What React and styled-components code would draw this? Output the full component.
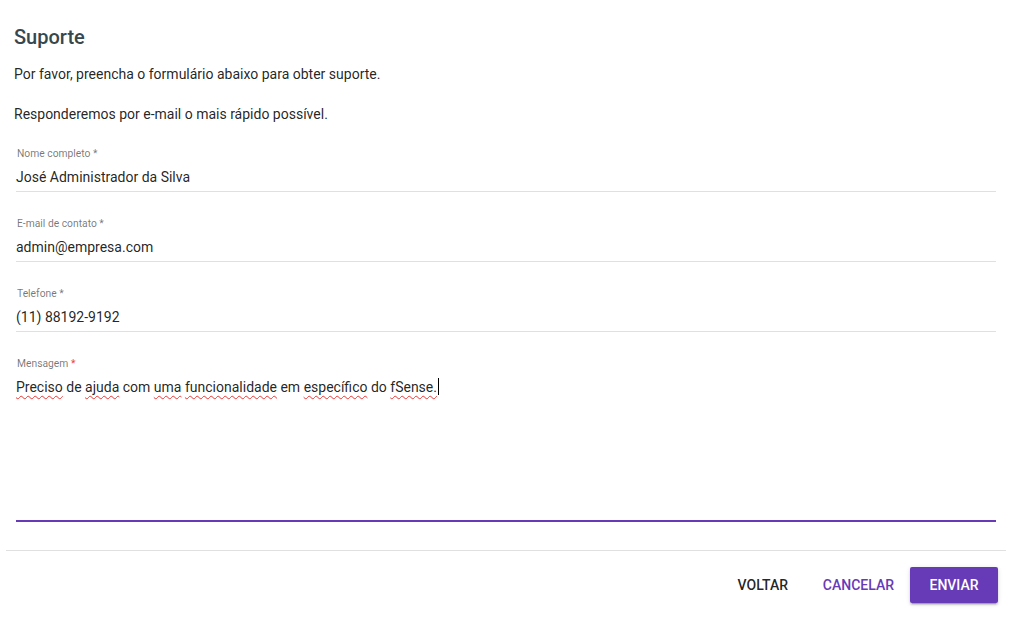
import React from "react";
import styled, { createGlobalStyle } from "styled-components";

const Global = createGlobalStyle`
  html, body { margin: 0; padding: 0; background: #fff; }
  body { font-family: Roboto, "Noto Sans", Arial, sans-serif; color: rgba(0,0,0,0.87); }
  * { box-sizing: border-box; }
`;

const Dialog = styled.div`
  width: 1009px;
  height: 626px;
  padding: 0 3px 0 6px;
  display: flex;
  flex-direction: column;
`;

const Content = styled.div`
  padding: 25px 8px 0 8px;
  display: flex;
  flex-direction: column;
`;

const Title = styled.h2`
  margin: 0;
  font-size: 20px;
  line-height: 24px;
  font-weight: 500;
  color: #37474f;
`;

const Paragraph = styled.p`
  margin: ${(p) => p.$top}px 0 0;
  font-size: 14px;
  line-height: 20px;
  color: rgba(0,0,0,0.87);
`;

const Form = styled.form`
  display: flex;
  flex-direction: column;
  gap: 24px;
  margin: 22px 2px 0;
`;

const Field = styled.label`
  display: flex;
  flex-direction: column;
  border-bottom: ${(p) => (p.$focused ? "2px solid #673ab7" : "1px solid #e0e0e0")};
`;

const Label = styled.span`
  font-size: 10.3px;
  line-height: 14px;
  margin-top: 1px;
  color: rgba(0,0,0,0.54);
  padding-left: 1px;
`;

const Star = styled.span`
  color: ${(p) => (p.$warn ? "#f44336" : "rgba(0,0,0,0.54)")};
`;

const Input = styled.input`
  border: none;
  outline: none;
  background: transparent;
  padding: 4px 0 2px;
  margin: 0;
  font-family: inherit;
  font-size: 14px;
  line-height: 24px;
  height: 30px;
  color: rgba(0,0,0,0.87);
`;

const MessageBox = styled.div`
  height: 149px;
  padding-top: 4px;
  font-size: 14px;
  line-height: 24px;
  color: rgba(0,0,0,0.87);
`;

const Misspelled = styled.span`
  text-decoration: underline wavy #e53935;
  text-decoration-thickness: 1px;
  text-underline-offset: 3px;
`;

const Caret = styled.span`
  display: inline-block;
  width: 1px;
  height: 17px;
  background: #000;
  vertical-align: -3px;
  margin-left: 1px;
`;

const Divider = styled.hr`
  margin: 28px 0 0;
  border: none;
  border-top: 1px solid #e0e0e0;
  height: 0;
`;

const Actions = styled.div`
  display: flex;
  justify-content: flex-end;
  padding: 16px 8px 0 0;
`;

const Button = styled.button`
  min-width: 88px;
  height: 36px;
  padding: 0 16px;
  border: none;
  border-radius: 2px;
  font-family: inherit;
  font-size: 14px;
  font-weight: 500;
  line-height: 36px;
  text-transform: uppercase;
  cursor: pointer;
  background: ${(p) => (p.$raised ? "#673ab7" : "transparent")};
  color: ${(p) => (p.$raised ? "#fff" : p.$primary ? "#673ab7" : "rgba(0,0,0,0.87)")};
  box-shadow: ${(p) =>
    p.$raised
      ? "0 3px 1px -2px rgba(0,0,0,.2), 0 2px 2px 0 rgba(0,0,0,.14), 0 1px 5px 0 rgba(0,0,0,.12)"
      : "none"};
`;

const fields = [
  { label: "Nome completo", value: "José Administrador da Silva" },
  { label: "E-mail de contato", value: "admin@empresa.com" },
  { label: "Telefone", value: "(11) 88192-9192" },
];

export default function App() {
  return (
    <>
      <Global />
      <Dialog>
        <Content>
          <Title>Suporte</Title>
          <Paragraph $top={15}>Por favor, preencha o formulário abaixo para obter suporte.</Paragraph>
          <Paragraph $top={20}>Responderemos por e-mail o mais rápido possível.</Paragraph>
          <Form onSubmit={(e) => e.preventDefault()}>
            {fields.map((f) => (
              <Field key={f.label}>
                <Label>
                  {f.label} <Star>*</Star>
                </Label>
                <Input defaultValue={f.value} />
              </Field>
            ))}
            <Field $focused>
              <Label>
                Mensagem <Star $warn>*</Star>
              </Label>
              <MessageBox>
                <Misspelled>Preciso</Misspelled> de <Misspelled>ajuda</Misspelled> com{" "}
                <Misspelled>uma</Misspelled> <Misspelled>funcionalidade</Misspelled> em{" "}
                <Misspelled>específico</Misspelled> do <Misspelled>fSense.</Misspelled>
                <Caret />
              </MessageBox>
            </Field>
          </Form>
        </Content>
        <Divider />
        <Actions>
          <Button>Voltar</Button>
          <Button $primary>Cancelar</Button>
          <Button $raised>Enviar</Button>
        </Actions>
      </Dialog>
    </>
  );
}
